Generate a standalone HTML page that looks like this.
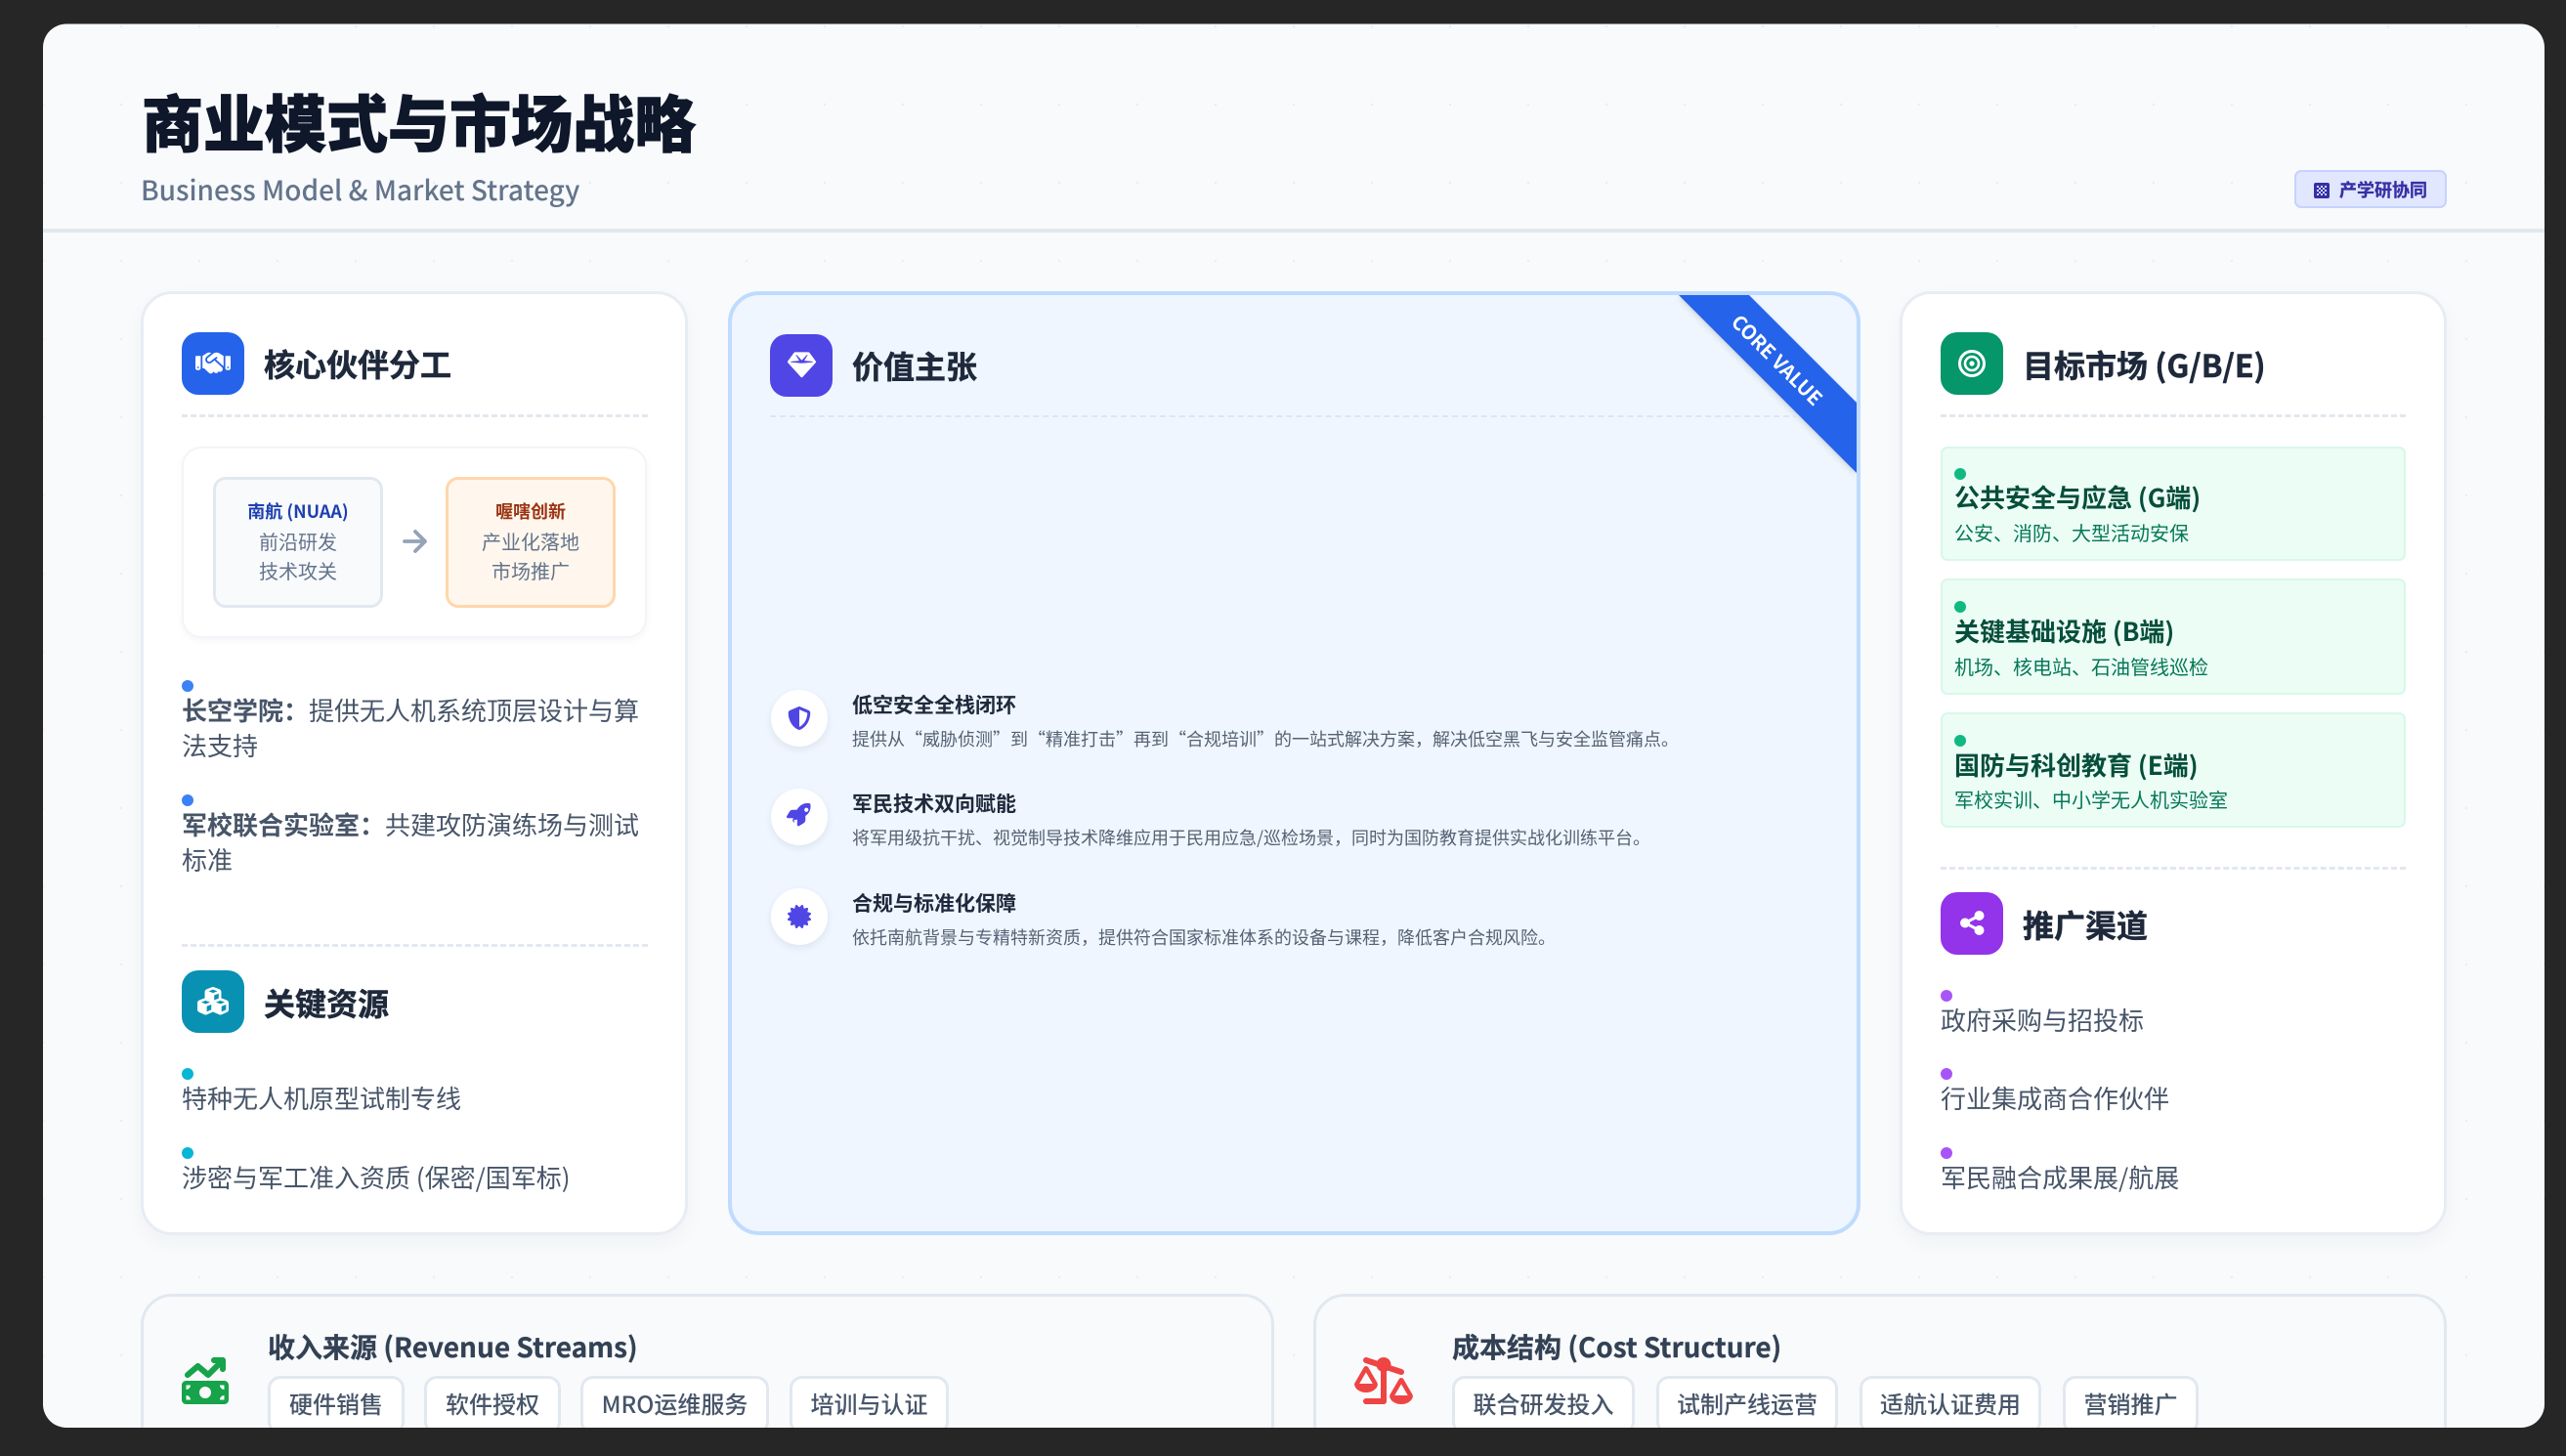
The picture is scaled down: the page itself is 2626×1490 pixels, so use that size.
<!DOCTYPE html>
<html lang="zh"><head><meta charset="utf-8"><style>
*{box-sizing:border-box;margin:0;padding:0}
html,body{width:2626px;height:1490px;background:#262626;overflow:hidden}
body{position:relative;font-family:"Liberation Sans","Noto Sans CJK SC",sans-serif}
body,.t,.c{font-family:"Noto Sans CJK SC","Liberation Sans",sans-serif}
#s{position:absolute;left:0;top:0;width:2626px;height:1490px;background-color:#f8fafc;background-image:radial-gradient(rgba(203,213,225,.35) 1px,transparent 1.4px);background-size:80px 80px;background-position:4px 67px;clip-path:inset(24.5px 22px 29px 44px round 24px)}
.t{position:absolute;white-space:nowrap;line-height:40px;height:40px}
.c{position:absolute}
.card{position:absolute;background:#fff;border:3px solid #e8edf4;border-radius:32px;box-shadow:0 8px 20px rgba(15,23,42,.04)}
.ic{position:absolute;width:64px;height:64px;border-radius:17px}
.ic svg,.v svg{position:absolute}
.h{font-size:32px;font-weight:700;color:#1e293b;-webkit-text-stroke:.5px #1e293b}
.d{position:absolute;height:0;border-top:3px dashed #e2e8f0}
.dot{position:absolute;width:12px;height:12px;border-radius:50%}
.li{font-size:26px;color:#475569}
.li b{font-weight:700}
.nb{position:absolute;top:488px;height:134px;width:174px;border-radius:13px;border:3px solid #e2e8f0;background:#f8fafc}
.cn{position:absolute;width:174px;text-align:center;white-space:nowrap;line-height:30px}
.v{position:absolute;left:789px;width:58px;height:58px;border-radius:50%;background:#fff;box-shadow:0 3px 8px rgba(15,23,42,.08)}
.vt{font-size:21px;font-weight:700;color:#1e293b}
.vd{font-size:18px;color:#566273}
.m{position:absolute;left:1986px;width:476px;background:#ecfdf5;border:2.500px solid #d8f8e9;border-radius:7px}
.mt{font-size:26px;font-weight:700;color:#064e3b}
.ms{font-size:20px;color:#047857}
.b{position:absolute;top:1324px;height:180px;background:#f8fafc;border:3px solid #e2e8f0;border-radius:32px}
.bt{font-size:28px;font-weight:700;color:#334155;-webkit-text-stroke:.25px #334155}
.p{position:absolute;top:1408px;height:60px;background:#fff;border:3px solid #e2e8f0;border-radius:13px;font-size:24px;color:#475569;font-weight:500;text-align:center;line-height:50px;white-space:nowrap}
</style></head><body><div id="s">

<div class="t" style="left:145px;top:84px;height:80px;line-height:80px;font-size:63px;font-weight:900;color:#0f172a;-webkit-text-stroke:1px #0f172a">商业模式与市场战略</div>
<div class="t" style="left:144px;top:174px;font-size:28px;font-weight:500;color:#64748b">Business Model &amp; Market Strategy</div>
<div class="c" style="left:44px;top:234px;width:2560px;height:4px;background:#e2e8f0"></div>

<div class="c" style="left:2348px;top:174px;width:156px;height:39px;background:#e0e7ff;border:2px solid #c7d2fe;border-radius:7px"></div>
<svg class="c" style="left:2368px;top:187px" width="16" height="16" viewBox="0 0 16 16"><rect width="16" height="16" rx="2" fill="#3730a3"/><g fill="#c7d2fe"><rect x="3" y="3" width="2" height="2"/><rect x="7" y="3" width="2" height="2"/><rect x="11" y="3" width="2" height="2"/><rect x="5" y="5" width="2" height="2"/><rect x="9" y="5" width="2" height="2"/><rect x="3" y="7" width="2" height="2"/><rect x="7" y="7" width="2" height="2"/><rect x="11" y="7" width="2" height="2"/><rect x="5" y="9" width="2" height="2"/><rect x="9" y="9" width="2" height="2"/><rect x="3" y="11" width="2" height="2"/><rect x="7" y="11" width="2" height="2"/><rect x="11" y="11" width="2" height="2"/></g></svg>
<div class="t" style="left:2394px;top:174px;font-size:18px;font-weight:700;color:#3730a3;-webkit-text-stroke:.3px #3730a3">产学研协同</div>

<!-- left card -->
<div class="card" style="left:144px;top:298px;width:560px;height:966px"></div>
<div class="ic" style="left:186px;top:340px;background:#2563eb"><svg style="left:14px;top:17px" width="36" height="29" viewBox="0 0 640 512"><path fill="#fff" d="M323.400 85.200l-96.800 78.400c-16.100 13-19.200 36.400-7 53.100c12.900 17.800 38 21.300 55.300 7.800l99.300-77.200c7-5.400 17-4.200 22.500 2.800s4.200 17-2.800 22.500l-20.900 16.200L512 316.800V128h-.7l-3.900-2.500L434.800 79c-15.300-9.800-33.200-15-51.400-15c-21.800 0-43 7.500-60 21.200zm22.800 124.400l-51.700 40.200C263 274.400 217.300 268 193.700 235.600c-22.200-30.500-16.600-73.100 12.700-96.800l83.200-67.300c-11.600-4.900-24.100-7.400-36.800-7.400C234 64 215.700 69.600 200 80l-72 48V352h28.200l91.400 83.400c19.600 17.900 49.900 16.500 67.800-3.100c5.500-6.100 9.200-13.200 11.100-20.600l17 15.600c19.500 17.900 49.900 16.600 67.800-2.900c4.500-4.900 7.800-10.600 9.900-16.500c19.400 13 45.800 10.300 62.100-7.500c17.900-19.500 16.600-49.900-2.900-67.800l-134.200-123zM16 128c-8.800 0-16 7.200-16 16V352c0 17.700 14.300 32 32 32H64c17.700 0 32-14.300 32-32V128H16zM48 320a16 16 0 1 1 0 32 16 16 0 1 1 0-32zM544 128V352c0 17.700 14.300 32 32 32h32c17.700 0 32-14.300 32-32V144c0-8.800-7.200-16-16-16H544zm32 208a16 16 0 1 1 32 0 16 16 0 1 1 -32 0z"/></svg></div>
<div class="t h" style="left:270px;top:352px">核心伙伴分工</div>
<div class="d" style="left:186px;top:424px;width:477px"></div>

<div class="c" style="left:186px;top:457px;width:476px;height:196px;background:#fff;border:2px solid #f1f5f9;border-radius:20px;box-shadow:0 3px 8px rgba(15,23,42,.04)"></div>
<div class="nb" style="left:218px"></div>
<div class="nb" style="left:456px;background:#fff7ed;border-color:#fed7aa"></div>
<div class="cn" style="left:218px;top:508px;font-size:18px;font-weight:700;color:#1e40af">南航 (NUAA)</div>
<div class="cn" style="left:218px;top:539px;font-size:20px;color:#64748b">前沿研发<br>技术攻关</div>
<div class="cn" style="left:456px;top:508px;font-size:18px;font-weight:700;color:#9a3412">喔嗐创新</div>
<div class="cn" style="left:456px;top:539px;font-size:20px;color:#64748b">产业化落地<br>市场推广</div>
<svg class="c" style="left:412px;top:541px" width="26" height="26" viewBox="0 0 26 26"><path d="M2 13h20M13 3l10 10-10 10" fill="none" stroke="#94a3b8" stroke-width="3.800" stroke-linecap="round" stroke-linejoin="round"/></svg>

<div class="dot" style="left:186px;top:696px;background:#3b82f6"></div>
<div class="t li" style="left:186px;top:707px"><b>长空学院：</b>提供无人机系统顶层设计与算</div>
<div class="t li" style="left:186px;top:743px">法支持</div>
<div class="dot" style="left:186px;top:813px;background:#3b82f6"></div>
<div class="t li" style="left:186px;top:824px"><b>军校联合实验室：</b>共建攻防演练场与测试</div>
<div class="t li" style="left:186px;top:860px">标准</div>

<div class="d" style="left:186px;top:966px;width:477px"></div>
<div class="ic" style="left:186px;top:993px;background:#0891b2"><svg style="left:16px;top:17px" width="32" height="28.500" viewBox="0 0 576 512"><path fill="#fff" d="M290.800 48.600l78.400 29.700L288 109.500 206.800 78.300l78.400-29.700c1.800-.7 3.800-.7 5.700 0zM136 92.500V204.700c-1.300 .4-2.600 .8-3.900 1.300l-96 36.400C14.400 250.600 0 271.500 0 294.700V413.900c0 22.200 13.100 42.300 33.500 51.300l96 42.200c14.400 6.300 30.700 6.300 45.100 0L288 457.500l113.500 49.900c14.400 6.300 30.700 6.300 45.100 0l96-42.200c20.300-8.900 33.500-29.100 33.500-51.300V294.700c0-23.300-14.400-44.100-36.100-52.400l-96-36.400c-1.300-.5-2.600-.9-3.900-1.300V92.500c0-23.300-14.400-44.100-36.100-52.400l-96-36.400c-12.800-4.800-26.900-4.800-39.700 0l-96 36.400C150.400 48.400 136 69.300 136 92.500zM392 210.600l-82.400 31.200V152.600L392 121v89.600zM154.800 250.900l78.400 29.700L152 311.700 70.800 280.600l78.400-29.700c1.800-.7 3.800-.7 5.700 0zm18.800 204.400V354.800L256 323.200v95.900l-82.400 36.200zM421.200 250.900c1.800-.7 3.800-.7 5.700 0l78.400 29.700L424 311.700l-81.200-31.100 78.400-29.700zM523.200 421.200l-77.600 34.100V354.800L528 323.200v90.700c0 3.200-1.900 6-4.800 7.300z"/></svg></div>
<div class="t h" style="left:270px;top:1006px">关键资源</div>
<div class="dot" style="left:186px;top:1093px;background:#06b6d4"></div>
<div class="t li" style="left:186px;top:1104px">特种无人机原型试制专线</div>
<div class="dot" style="left:186px;top:1174px;background:#06b6d4"></div>
<div class="t li" style="left:186px;top:1185px">涉密与军工准入资质 (保密/国军标)</div>

<!-- center card -->
<div class="d" style="left:788px;top:425px;width:1053px;border-top-width:2px;border-color:#dde6f0;z-index:2"></div>
<div class="card" style="left:745px;top:298px;width:1159px;height:966px;background:#eff6ff;border:4px solid #bfdbfe;overflow:hidden;box-shadow:none">
<svg class="c" style="left:0;top:0;filter:drop-shadow(-1px 2px 3px rgba(15,23,42,.14))" width="1151" height="958" viewBox="749 302 1151 958"><polygon points="1718,302 1790,302 1900,412 1900,484" fill="#2563eb"/></svg>
<div class="t" style="left:1000px;top:46px;width:140px;text-align:center;font-size:20px;font-weight:700;color:#fff;transform:rotate(45deg)">CORE VALUE</div>
</div>
<div class="ic" style="left:788px;top:342px;background:#4f46e5"><svg style="left:18px;top:17px" width="29" height="29" viewBox="0 0 512 512"><path fill="#fff" d="M116.700 33.800c4.500-6.100 11.700-9.800 19.300-9.800H376c7.600 0 14.800 3.600 19.300 9.800l112 152c6.800 9.200 6.100 21.900-1.500 30.400l-232 256c-4.500 5-11 7.900-17.800 7.900s-13.200-2.900-17.800-7.900l-232-256c-7.700-8.500-8.300-21.200-1.500-30.400l112-152zm38.500 39.800c-3.300 2.500-4.200 7-2.100 10.500l57.400 95.600L63.300 192c-4.100 .3-7.300 3.800-7.300 8s3.200 7.600 7.300 8l192 16c.4 0 .9 0 1.300 0l192-16c4.100-.3 7.300-3.800 7.300-8s-3.200-7.600-7.300-8L301.500 179.800l57.400-95.600c2.100-3.500 1.200-8-2.100-10.500s-7.900-2.200-10.700 .9L256 172.200 165.900 74.600c-2.800-3.100-7.400-3.400-10.700-.9z"/></svg></div>
<div class="t h" style="left:872px;top:354px">价值主张</div>

<div class="v" style="top:706px"><svg style="left:17px;top:17px" width="24" height="24" viewBox="0 0 512 512"><path fill="#4f46e5" d="M256 0c4.600 0 9.200 1 13.400 2.900L457.700 82.800c22 9.300 38.400 31 38.300 57.200c-.5 99.200-41.300 280.700-213.600 363.200c-16.700 8-36.100 8-52.800 0C57.300 420.700 16.500 239.200 16 140c-.1-26.200 16.300-47.900 38.300-57.200L242.700 2.900C246.800 1 251.400 0 256 0zm0 66.800V444.800C394 378 431.100 230.100 432 141.400L256 66.800z"/></svg></div>
<div class="t vt" style="left:872px;top:701px">低空安全全栈闭环</div>
<div class="t vd" style="left:872px;top:736px">提供从“威胁侦测”到“精准打击”再到“合规培训”的一站式解决方案，解决低空黑飞与安全监管痛点。</div>

<div class="v" style="top:807px"><svg style="left:16px;top:15px" width="27" height="27" viewBox="0 0 512 512"><path fill="#4f46e5" d="M156.600 384.900L125.700 354c-8.500-8.500-11.500-20.800-7.700-32.200c3-8.900 7-20.500 11.800-33.800L24 288c-8.600 0-16.600-4.600-20.900-12.100s-4.200-16.700 .2-24.100l52.500-88.500c13-21.900 36.500-35.300 61.900-35.300l82.300 0c2.400-4 4.800-7.700 7.200-11.300C289.100-4.100 385.100-8.100 442.500 1.300c9.700 1.600 17.700 9.500 19.200 19.200c9.400 57.400 5.400 153.400-84.900 215.500c-3.600 2.400-7.300 4.800-11.300 7.200l0 82.300c0 25.400-13.400 49-35.300 61.900l-88.500 52.500c-7.400 4.400-16.600 4.500-24.100 .2s-12.100-12.200-12.100-20.900l0-107.200c-14.100 4.900-26.400 8.900-35.700 11.900c-11.200 3.600-23.400 .5-31.800-7.800zM384 168a40 40 0 1 0 0-80 40 40 0 1 0 0 80z"/></svg></div>
<div class="t vt" style="left:872px;top:802px">军民技术双向赋能</div>
<div class="t vd" style="left:872px;top:837px">将军用级抗干扰、视觉制导技术降维应用于民用应急/巡检场景，同时为国防教育提供实战化训练平台。</div>

<div class="v" style="top:909px"><svg style="left:17px;top:17px" width="24" height="24" viewBox="0 0 512 512"><path fill="#4f46e5" d="M211 7.300C205 1 196-1.400 187.600 .8s-14.900 8.900-17.100 17.300L154.700 80.600l-62-17.500c-8.400-2.400-17.400 0-23.500 6.100s-8.500 15.100-6.100 23.500l17.500 62L18.100 170.600c-8.400 2.100-15 8.700-17.300 17.100S1 205 7.300 211l46.200 45L7.300 301C1 307-1.400 316 .8 324.400s8.900 14.900 17.300 17.100l62.500 15.800-17.500 62c-2.400 8.400 0 17.400 6.100 23.500s15.100 8.500 23.500 6.100l62-17.500 15.800 62.500c2.100 8.400 8.700 15 17.100 17.300s17.300-.2 23.400-6.400l45-46.200 45 46.200c6.100 6.200 15 8.700 23.400 6.400s14.900-8.900 17.100-17.300l15.800-62.500 62 17.500c8.400 2.400 17.400 0 23.500-6.100s8.500-15.100 6.100-23.500l-17.500-62 62.500-15.800c8.400-2.100 15-8.700 17.300-17.100s-.2-17.400-6.400-23.400l-46.200-45 46.200-45c6.200-6.100 8.700-15 6.400-23.400s-8.900-14.900-17.300-17.100l-62.500-15.800 17.500-62c2.400-8.400 0-17.400-6.100-23.500s-15.100-8.500-23.500-6.100l-62 17.500L341.400 18.100c-2.100-8.400-8.700-15-17.100-17.300S307 1 301 7.300L256 53.500 211 7.300z"/></svg></div>
<div class="t vt" style="left:872px;top:904px">合规与标准化保障</div>
<div class="t vd" style="left:872px;top:939px">依托南航背景与专精特新资质，提供符合国家标准体系的设备与课程，降低客户合规风险。</div>

<!-- right card -->
<div class="card" style="left:1944px;top:298px;width:560px;height:966px"></div>
<div class="ic" style="left:1986px;top:340px;background:#059669"><svg style="left:18px;top:18px" width="28" height="28" viewBox="0 0 28 28" fill="none" stroke="#fff"><circle cx="14" cy="14" r="12.500" stroke-width="3"/><circle cx="14" cy="14" r="7" stroke-width="2.600"/><circle cx="14" cy="14" r="2.600" fill="#fff" stroke="none"/></svg></div>
<div class="t h" style="left:2070px;top:353px">目标市场 (G/B/E)</div>
<div class="d" style="left:1986px;top:424px;width:476px"></div>

<div class="m" style="top:457px;height:117px"></div>
<div class="dot" style="left:2000px;top:479px;background:#10b981"></div>
<div class="t mt" style="left:2000px;top:489px">公共安全与应急 (G端)</div>
<div class="t ms" style="left:2000px;top:525px">公安、消防、大型活动安保</div>
<div class="m" style="top:592px;height:119px"></div>
<div class="dot" style="left:2000px;top:615px;background:#10b981"></div>
<div class="t mt" style="left:2000px;top:626px">关键基础设施 (B端)</div>
<div class="t ms" style="left:2000px;top:662px">机场、核电站、石油管线巡检</div>
<div class="m" style="top:729px;height:118px"></div>
<div class="dot" style="left:2000px;top:752px;background:#10b981"></div>
<div class="t mt" style="left:2000px;top:763px">国防与科创教育 (E端)</div>
<div class="t ms" style="left:2000px;top:798px">军校实训、中小学无人机实验室</div>

<div class="d" style="left:1986px;top:887px;width:476px"></div>
<div class="ic" style="left:1986px;top:913px;background:#9333ea"><svg style="left:20px;top:19px" width="25" height="25" viewBox="0 0 25 25"><path d="M19.500 5L5 12.500l14.500 7.500" fill="none" stroke="#fff" stroke-width="3"/><circle cx="19.500" cy="5" r="5" fill="#fff"/><circle cx="5" cy="12.500" r="5" fill="#fff"/><circle cx="19.500" cy="20" r="5" fill="#fff"/></svg></div>
<div class="t h" style="left:2070px;top:926px">推广渠道</div>
<div class="dot" style="left:1986px;top:1013px;background:#a855f7"></div>
<div class="t li" style="left:1986px;top:1024px">政府采购与招投标</div>
<div class="dot" style="left:1986px;top:1093px;background:#a855f7"></div>
<div class="t li" style="left:1986px;top:1104px">行业集成商合作伙伴</div>
<div class="dot" style="left:1986px;top:1174px;background:#a855f7"></div>
<div class="t li" style="left:1986px;top:1185px">军民融合成果展/航展</div>

<!-- bottom -->
<div class="b" style="left:144px;width:1160px"></div>
<svg class="c" style="left:186px;top:1389px" width="48" height="48" viewBox="0 0 512 512"><path fill="#16a34a" d="M470.700 9.400c3 3.100 5.300 6.600 6.900 10.300s2.400 7.800 2.400 12.200l0 .1v0 96c0 17.700-14.300 32-32 32s-32-14.300-32-32V109.300L310.600 214.600c-11.800 11.800-30.800 12.600-43.500 1.700L176 138.100 84.800 216.300c-13.400 11.500-33.600 9.900-45.100-3.500s-9.900-33.600 3.500-45.100l112-96c12-10.300 29.700-10.300 41.700 0l89.500 76.700L370.700 64H352c-17.700 0-32-14.300-32-32s14.300-32 32-32h96c8.800 0 16.800 3.600 22.600 9.300l.1 .1zM0 304c0-26.500 21.500-48 48-48H464c26.500 0 48 21.500 48 48V464c0 26.500-21.500 48-48 48H48c-26.500 0-48-21.500-48-48V304zM48 416v48H96c0-26.500-21.500-48-48-48zM96 304H48v48c26.500 0 48-21.500 48-48zM464 416c-26.500 0-48 21.500-48 48h48V416zM416 304c0 26.500 21.500 48 48 48V304H416zm-96 80a64 64 0 1 0 -128 0 64 64 0 1 0 128 0z"/></svg>
<div class="t bt" style="left:274px;top:1358px">收入来源 (Revenue Streams)</div>
<div class="p" style="left:274px;width:140px">硬件销售</div>
<div class="p" style="left:434px;width:140px">软件授权</div>
<div class="p" style="left:594px;width:193px">MRO运维服务</div>
<div class="p" style="left:808px;width:163px">培训与认证</div>

<div class="b" style="left:1344px;width:1160px"></div>
<svg class="c" style="left:1386px;top:1389px" width="60" height="48" viewBox="0 0 640 512"><g fill="#ef4444" transform="translate(640,0) scale(-1,1)"><path d="M522.100 62.400c16.800-5.600 25.800-23.700 20.200-40.500S518.600-3.900 501.900 1.600l-113 37.700C375 15.800 349.400 0 320 0c-44.200 0-80 35.800-80 80c0 3 .2 5.900 .5 8.800L117.900 129.600c-16.800 5.600-25.800 23.700-20.200 40.500s23.700 25.800 40.500 20.200l135.500-45.200c4.500 3.200 9.300 5.900 14.400 8.200V480c0 17.700 14.300 32 32 32H512c17.700 0 32-14.300 32-32s-14.300-32-32-32H352V153.300c21-9.200 37.200-27 44.400-49l125.700-41.900z"/><path id="pan" fill-rule="evenodd" d="M439.600 288L512 163.800 584.400 288H439.600zM512 384c62.900 0 115.200-34 126-78.900c2.600-11-1-22.300-6.700-32.100L536.100 109.800c-5-8.600-14.200-13.800-24.100-13.800s-19.100 5.300-24.100 13.800L392.700 273.100c-5.700 9.800-9.300 21.100-6.700 32.100C396.800 350 449.100 384 512 384z"/><path fill-rule="evenodd" transform="translate(-384,128)" d="M439.600 288L512 163.800 584.400 288H439.600zM512 384c62.900 0 115.200-34 126-78.900c2.600-11-1-22.300-6.700-32.100L536.100 109.800c-5-8.600-14.200-13.800-24.100-13.800s-19.100 5.300-24.100 13.800L392.700 273.100c-5.700 9.800-9.300 21.100-6.700 32.100C396.800 350 449.100 384 512 384z"/></g></svg>
<div class="t bt" style="left:1486px;top:1358px">成本结构 (Cost Structure)</div>
<div class="p" style="left:1486px;width:187px">联合研发投入</div>
<div class="p" style="left:1695px;width:186px">试制产线运营</div>
<div class="p" style="left:1903px;width:186px">适航认证费用</div>
<div class="p" style="left:2111px;width:139px">营销推广</div>

</div></body></html>
